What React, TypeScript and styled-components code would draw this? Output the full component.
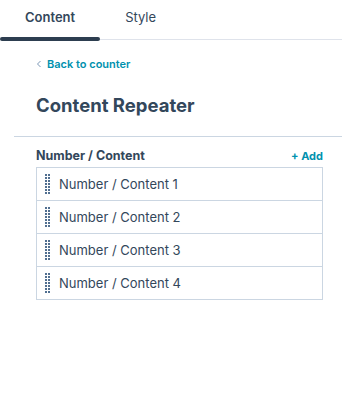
import React from "react";
import styled, { createGlobalStyle } from "styled-components";

const GlobalStyle = createGlobalStyle`
  body {
    margin: 0;
    background: #ffffff;
    font-family: Inter, "Noto Sans", sans-serif;
    color: #33475b;
  }
`;

const Page = styled.div`
  width: 342px;
  height: 419px;
  background: #ffffff;
`;

const TabBar = styled.div`
  display: flex;
  height: 39px;
  border-bottom: 1px solid #dfe3eb;
`;

const Tab = styled.div<{ $active?: boolean }>`
  position: relative;
  padding: 0 25px;
  display: flex;
  align-items: center;
  font-size: 13px;
  font-weight: ${(p) => (p.$active ? 600 : 400)};
  color: #33475b;
  padding-bottom: 5px;

  &::after {
    content: "";
    display: ${(p) => (p.$active ? "block" : "none")};
    position: absolute;
    left: 0;
    right: 0;
    bottom: -2px;
    height: 4px;
    border-radius: 2px;
    background: #2d3e50;
  }
`;

const Panel = styled.div`
  padding: 17px 19px 0 36px;
`;

const BackLink = styled.a`
  display: flex;
  align-items: center;
  gap: 5px;
  font-size: 11px;
  font-weight: 600;
  color: #0091ae;
  text-decoration: none;
  height: 14px;
`;

const Heading = styled.h1`
  margin: 22px 0 0;
  font-size: 18.5px;
  font-weight: 700;
  color: #33475b;
  line-height: 24px;
`;

const Divider = styled.hr`
  margin: 19px -19px 0 -22px;
  border: 0;
  border-top: 1px solid #cbd6e2;
`;

const SectionHeader = styled.div`
  display: flex;
  justify-content: space-between;
  align-items: center;
  margin-top: 10px;
  height: 17px;
`;

const SectionLabel = styled.span`
  font-size: 12.5px;
  font-weight: 700;
  color: #33475b;
`;

const AddButton = styled.span`
  font-size: 11px;
  font-weight: 700;
  color: #0091ae;
`;

const List = styled.div`
  margin-top: 3px;
  border: 1px solid #cbd6e2;
`;

const Row = styled.div`
  display: flex;
  align-items: center;
  gap: 9px;
  height: 32px;
  padding-left: 8px;
  & + & {
    border-top: 1px solid #cbd6e2;
  }
`;

const Handle = styled.div`
  display: grid;
  grid-template-columns: 2px 2px;
  grid-auto-rows: 2px;
  gap: 1px;
  & > span {
    background: #516f90;
  }
`;

const RowLabel = styled.span`
  font-size: 13px;
  color: #33475b;
`;

const items = [
  "Number / Content 1",
  "Number / Content 2",
  "Number / Content 3",
  "Number / Content 4",
];

const DragHandle = () => (
  <Handle>
    {Array.from({ length: 14 }).map((_, i) => (
      <span key={i} />
    ))}
  </Handle>
);

const App: React.FC = () => {
  return (
    <Page>
      <GlobalStyle />
      <TabBar>
        <Tab $active>Content</Tab>
        <Tab>Style</Tab>
      </TabBar>
      <Panel>
        <BackLink href="#">
          <svg width="6" height="8" viewBox="0 0 6 8">
            <path d="M4.5 1 L1.5 4 L4.5 7" fill="none" stroke="#7c98b6" strokeWidth="1" />
          </svg>
          Back to counter
        </BackLink>
        <Heading>Content Repeater</Heading>
        <Divider />
        <SectionHeader>
          <SectionLabel>Number / Content</SectionLabel>
          <AddButton>+ Add</AddButton>
        </SectionHeader>
        <List>
          {items.map((item) => (
            <Row key={item}>
              <DragHandle />
              <RowLabel>{item}</RowLabel>
            </Row>
          ))}
        </List>
      </Panel>
    </Page>
  );
};

export default App;
